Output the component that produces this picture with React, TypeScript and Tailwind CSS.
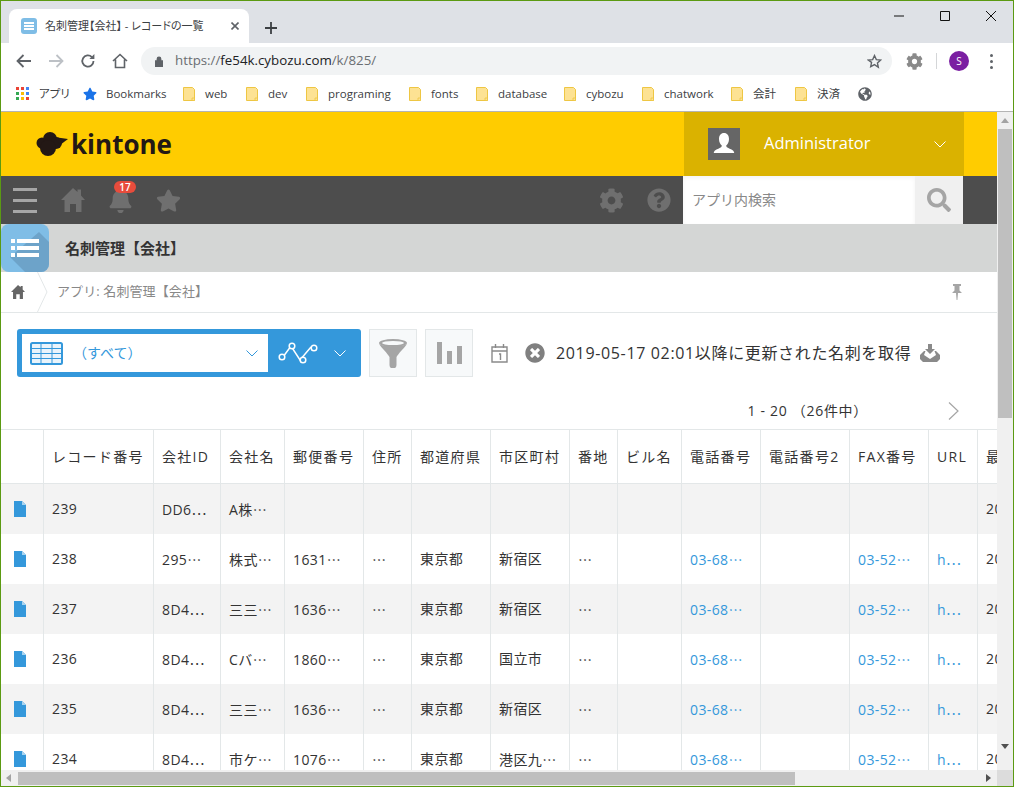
import { FaBell, FaCog, FaQuestionCircle, FaSearch, FaStar, FaTimesCircle, FaGlobeAmericas } from "react-icons/fa";

const bookmarks = [
  { label: "web", cls: "w-[63px]" },
  { label: "dev", cls: "w-[60px]" },
  { label: "programing", cls: "w-[103px]" },
  { label: "fonts", cls: "w-[67px]" },
  { label: "database", cls: "w-[88px]" },
  { label: "cybozu", cls: "w-[78px]" },
  { label: "chatwork", cls: "w-[89px]" },
  { label: "会計", cls: "w-[64px]" },
  { label: "決済", cls: "w-[63px]" },
];

const columns = [
  { label: "", cls: "w-[43px]" },
  { label: "レコード番号", cls: "w-[110px]" },
  { label: "会社ID", cls: "w-[67px]" },
  { label: "会社名", cls: "w-[64px]" },
  { label: "郵便番号", cls: "w-[79px]" },
  { label: "住所", cls: "w-[48px]" },
  { label: "都道府県", cls: "w-[79px]" },
  { label: "市区町村", cls: "w-[79px]" },
  { label: "番地", cls: "w-[48px]" },
  { label: "ビル名", cls: "w-[64px]" },
  { label: "電話番号", cls: "w-[79px]" },
  { label: "電話番号2", cls: "w-[89px]" },
  { label: "FAX番号", cls: "w-[79px]" },
  { label: "URL", cls: "w-[49px]" },
  { label: "最終更新日時", cls: "w-[160px]" },
];

const rows = [
  ["239", "DD6…", "A株…", "", "", "", "", "", "", "", "", "", "", "2019-05-17"],
  ["238", "295…", "株式…", "1631…", "…", "東京都", "新宿区", "…", "", "03-68…", "", "03-52…", "h…", "2019-05-17"],
  ["237", "8D4…", "三三…", "1636…", "…", "東京都", "新宿区", "…", "", "03-68…", "", "03-52…", "h…", "2019-05-17"],
  ["236", "8D4…", "Cバ…", "1860…", "…", "東京都", "国立市", "…", "", "03-68…", "", "03-52…", "h…", "2019-05-17"],
  ["235", "8D4…", "三三…", "1636…", "…", "東京都", "新宿区", "…", "", "03-68…", "", "03-52…", "h…", "2019-05-17"],
  ["234", "8D4…", "市ケ…", "1076…", "…", "東京都", "港区九…", "…", "", "03-68…", "", "03-52…", "h…", "2019-05-17"],
];

const linkCols = [9, 11, 12];

function Chevron({ className }: { className: string }) {
  return (
    <svg className={className} width="12" height="7" viewBox="0 0 12 7" fill="none" stroke="currentColor">
      <path d="M0.5 0.5 6 6 11.5 0.5" />
    </svg>
  );
}

function Folder() {
  return (
    <svg width="12" height="14" viewBox="0 0 12 14" className="shrink-0">
      <path d="M.5.5h9l2 2v11H.5z" fill="#fde293" stroke="#eec643" />
      <path d="M9 11h2.5v2.500H9z" fill="#fde293" stroke="#eec643" strokeWidth=".8" />
    </svg>
  );
}

function HomeIcon({ size, className }: { size: number; className: string }) {
  return (
    <svg className={className} width={size} height={size} viewBox="0 0 24 24" fill="currentColor">
      <path d="M12 0l4.500 4V1.500h3.500v6L24 12h-3.500v12H15v-8H9v8H3.500V12H0z" />
    </svg>
  );
}

function Ellipsis({ text }: { text: string }) {
  // the cut mark sits mid-height, as the Japanese fonts draw it
  if (!text.endsWith("…")) return <>{text}</>;
  return (
    <>
      {text.slice(0, -1)}
      <span className="font-['Noto_Sans_CJK_JP',sans-serif] tracking-[-1px]">…</span>
    </>
  );
}

function BrowserChrome() {
  return (
    <div className="shrink-0 font-['Open_Sans','Noto_Sans_CJK_JP',sans-serif]">
      <div className="flex h-[42px] bg-[#dee1e6] pl-2">
        <div className="mt-2 flex h-[34px] w-[240px] items-center rounded-t-lg bg-white pl-3 pr-[10px]">
          <div className="flex h-4 w-4 shrink-0 flex-col justify-center gap-[1px] rounded-[3px] bg-[#7fbde6] px-[3px]">
            <div className="h-[2px] bg-white" />
            <div className="h-[2px] bg-white" />
            <div className="h-[2px] bg-white" />
          </div>
          <span className="ml-2 whitespace-nowrap text-[11px] text-[#3c4043] [font-feature-settings:'palt']">名刺管理【会社】 - レコードの一覧</span>
          <svg className="ml-auto" width="8" height="8" viewBox="0 0 8 8" stroke="#5f6368" strokeWidth="1.6">
            <path d="M.5.5l7 7M7.5.5l-7 7" />
          </svg>
        </div>
        <svg className="ml-4 mt-[21px]" width="12" height="12" viewBox="0 0 12 12" stroke="#3c4043" strokeWidth="1.8">
          <path d="M6 0v12M0 6h12" />
        </svg>
        <div className="ml-auto mr-[17px] mt-[10px] flex h-[10px] items-center gap-[36px]">
          <svg width="10" height="10" viewBox="0 0 10 10" stroke="#111"><path d="M0 5h10" /></svg>
          <svg width="10" height="10" viewBox="0 0 10 10" stroke="#111" fill="none"><path d="M.5.5h9v9h-9z" /></svg>
          <svg width="10" height="10" viewBox="0 0 10 10" stroke="#111"><path d="M0 0l10 10M10 0L0 10" /></svg>
        </div>
      </div>
      <div className="flex h-[34px] items-start bg-white pl-[15px] pr-[18px] pt-1">
        <div className="flex h-7 items-center gap-[16px]">
          <svg width="16" height="14" viewBox="0 0 16 14" fill="none" stroke="#5f6368" strokeWidth="1.8">
            <path d="M15 7H2M7.500 1 1.500 7l6 6" />
          </svg>
          <svg width="16" height="14" viewBox="0 0 16 14" fill="none" stroke="#bdc1c6" strokeWidth="1.8">
            <path d="M1 7h13M8.500 1l6 6-6 6" />
          </svg>
          <svg width="16" height="16" viewBox="0 0 16 16" fill="none" stroke="#5f6368" strokeWidth="1.8">
            <path d="M13.500 8a5.600 5.600 0 1 1-1.600-3.900" />
            <path d="M14.400 1v5h-5z" fill="#5f6368" stroke="none" />
          </svg>
          <svg width="16" height="16" viewBox="0 0 16 16" fill="none" stroke="#5f6368" strokeWidth="1.6">
            <path d="M1 8 8 1.500 15 8M3.500 6.500v8h9v-8" />
          </svg>
        </div>
        <div className="ml-[13px] flex h-7 w-[751px] items-center rounded-full bg-[#f1f3f4] pl-[14px] pr-[10px]">
          <svg width="8" height="11" viewBox="0 0 8 11">
            <path d="M1.600 4.200V3a2.400 2.400 0 0 1 4.800 0v1.200H8V11H0V4.200z" fill="#5f6368" />
          </svg>
          <span className="ml-[12px] text-[13.3px]">
            <span className="text-[#6a6e72]">https://</span>
            <span className="text-[#202124]">fe54k.cybozu.com</span>
            <span className="text-[#6a6e72]">/k/825/</span>
          </span>
          <svg className="ml-auto" width="15" height="15" viewBox="0 0 24 24" fill="none" stroke="#5f6368" strokeWidth="2.2">
            <path d="M12 2.500l2.900 6.400 7 .8-5.200 4.700 1.400 6.900L12 17l-6.100 3.300 1.400-6.900L2.100 9.700l7-.8z" />
          </svg>
        </div>
        <div className="ml-[14px] flex h-7 items-center">
          <FaCog className="text-[#8a8a8a]" size={17} />
          <div className="ml-[13px] h-4 w-px bg-[#d4d6d8]" />
          <div className="ml-[12px] flex h-5 w-5 items-center justify-center rounded-full bg-[#7b1fa2] text-[10px] text-white">S</div>
          <div className="ml-[21px] flex flex-col gap-[3px]">
            <div className="h-[3px] w-[3px] rounded-full bg-[#5f6368]" />
            <div className="h-[3px] w-[3px] rounded-full bg-[#5f6368]" />
            <div className="h-[3px] w-[3px] rounded-full bg-[#5f6368]" />
          </div>
        </div>
      </div>
      <div className="flex h-[35px] items-center border-b border-[#b4b4b4] bg-white pb-[1px] pl-[15px] text-[11.5px] text-[#3c4043]">
        <div className="flex w-[67px] items-center">
          <div className="grid w-[13px] grid-cols-3 gap-[2px]">
            <div className="h-[3px] bg-[#ea4335]" />
            <div className="h-[3px] bg-[#ea4335]" />
            <div className="h-[3px] bg-[#4285f4]" />
            <div className="h-[3px] bg-[#34a853]" />
            <div className="h-[3px] bg-[#fbbc05]" />
            <div className="h-[3px] bg-[#4285f4]" />
            <div className="h-[3px] bg-[#34a853]" />
            <div className="h-[3px] bg-[#fbbc05]" />
            <div className="h-[3px] bg-[#ea4335]" />
          </div>
          <span className="ml-[10px] [font-feature-settings:'palt']">アプリ</span>
        </div>
        <div className="flex w-[100px] items-center">
          <FaStar className="text-[#1a73e8]" size={14} />
          <span className="ml-[9px]">Bookmarks</span>
        </div>
        {bookmarks.map((b) => (
          <div key={b.label} className={"flex items-center gap-[10px] " + b.cls}>
            <Folder />
            <span>{b.label}</span>
          </div>
        ))}
        <FaGlobeAmericas className="text-[#5f6368]" size={14} />
      </div>
    </div>
  );
}

function AppHeader() {
  return (
    <>
      <div className="flex h-16 shrink-0 items-center bg-[#ffcc00] pl-[35px]">
        <svg width="32" height="24" viewBox="0 0 32 24" fill="#231815" className="mt-[-1px]">
          <circle cx="6" cy="11" r="5.500" />
          <circle cx="14" cy="7" r="7" />
          <circle cx="20" cy="11" r="6" />
          <circle cx="12" cy="16" r="8" />
          <path d="M18 5l14 2-8 6z" />
        </svg>
        <span className="ml-[3px] font-['Open_Sans',sans-serif] text-[26px] font-bold leading-none text-[#231815]">kintone</span>
        <div className="ml-auto mr-[33px] flex h-16 w-[280px] items-center bg-[#dab200] pl-6 pr-[18px] text-white">
          <div className="relative flex h-8 w-8 items-center justify-center overflow-hidden bg-[#666]">
            <svg width="24" height="24" viewBox="0 0 24 24" fill="#fff">
              <path d="M12 1c3.200 0 5 2.400 5 6 0 3-1.400 5.500-2.800 6.500 0 1.500 1 2 3 3 2.500 1 5 2 5 4.500H1.800c0-2.500 2.500-3.500 5-4.500 2-1 3-1.500 3-3C8.400 12.500 7 10 7 7c0-3.600 1.800-6 5-6z" />
            </svg>
          </div>
          <span className="ml-6 mt-[-2px] font-['Open_Sans',sans-serif] text-[16.5px]">Administrator</span>
          <Chevron className="ml-auto" />
        </div>
      </div>
      <div className="flex h-12 shrink-0 items-center bg-[#4d4d4d] pl-3 text-[#6f6f6f]">
        <div className="flex w-6 flex-col gap-2">
          <div className="h-[3px] bg-[#a6a6a6]" />
          <div className="h-[3px] bg-[#a6a6a6]" />
          <div className="h-[3px] bg-[#a6a6a6]" />
        </div>
        <HomeIcon className="ml-6" size={24} />
        <div className="relative ml-[23px] flex">
          <FaBell size={25} />
          <div className="absolute left-[6px] top-[-7px] flex h-3 w-[22px] items-center justify-center rounded-full bg-[#e74c3c] font-['Open_Sans',sans-serif] text-[10px] font-semibold leading-none text-white">
            17
          </div>
        </div>
        <FaStar className="ml-[23px]" size={25} />
        <FaCog className="ml-[418px]" size={25} />
        <FaQuestionCircle className="ml-[23px]" size={24} />
        <div className="ml-3 flex h-12 w-[232px] items-center bg-white pl-[9px] text-sm text-[#888] shadow-inner">アプリ内検索</div>
        <div className="flex h-12 w-12 items-center justify-center bg-[#f0f0f0] text-[#a5a5a5]">
          <FaSearch size={24} />
        </div>
      </div>
      <div className="flex h-12 shrink-0 items-center bg-[#d4d6d5]">
        <div className="relative flex h-12 w-12 flex-col justify-center gap-[3px] overflow-hidden rounded-lg bg-[#7fbde6] px-[10px]">
          <svg className="absolute inset-0" width="48" height="48" viewBox="0 0 48 48">
            <path d="M38 8l10 10v30H24L9 33z" fill="#6da3c9" />
          </svg>
          <div className="relative flex gap-[2px]"><div className="h-1 w-[4px] bg-white" /><div className="h-1 flex-1 bg-white" /></div>
          <div className="relative flex gap-[2px]"><div className="h-1 w-[4px] bg-white" /><div className="h-1 flex-1 bg-white" /></div>
          <div className="relative flex gap-[2px]"><div className="h-1 w-[4px] bg-white" /><div className="h-1 flex-1 bg-white" /></div>
        </div>
        <span className="ml-4 text-[15px] font-bold text-[#333]">名刺管理【会社】</span>
      </div>
      <div className="flex h-[41px] shrink-0 items-center border-b border-[#e3e7e8] bg-white pl-[10px] pr-[35px]">
        <HomeIcon className="text-[#666]" size={14} />
        <svg className="ml-[12px]" width="11" height="40" viewBox="0 0 11 40" fill="none" stroke="#e3e7e8">
          <path d="M.5 0 10 20 .5 40" />
        </svg>
        <span className="ml-[9px] text-[13px] tracking-[0.1px] text-[#888]">アプリ: 名刺管理【会社】</span>
        <svg className="ml-auto" width="10" height="16" viewBox="0 0 10 16" fill="#a5a5a5">
          <path d="M1 0h8v2H7.500v4.500L10 9H6l-.6 7h-.8L4 9H0l2.500-2.500V2H1z" />
        </svg>
      </div>
    </>
  );
}

function RecordsToolbar() {
  return (
    <>
      <div className="mt-4 flex items-center pl-4">
        <div className="flex h-12 w-[344px] items-center rounded-[3px] bg-[#3498db] p-[5px]">
          <div className="flex h-[38px] w-[246px] items-center bg-white pl-2 pr-[10px] text-[#3498db]">
            <svg width="33" height="23" viewBox="0 0 33 23" fill="none" stroke="#3498db">
              <rect x="1" y="1" width="31" height="21" rx="1.500" strokeWidth="2" fill="#eaf4fb" />
              <path d="M1 6.500h31M1 11.500h31M1 16.500h31M11 2v20M22 2v20" strokeWidth="1" />
            </svg>
            <span className="ml-[10px] text-sm">（すべて）</span>
            <Chevron className="ml-auto" />
          </div>
          <svg className="ml-[10px]" width="40" height="22" viewBox="0 0 40 22" fill="none" stroke="#fff" strokeWidth="1.500">
            <path d="M5 15 13 4l9 14 11-13" />
            <circle cx="4" cy="15" r="2.800" fill="#3498db" />
            <circle cx="14" cy="4" r="2.800" fill="#3498db" />
            <circle cx="25" cy="18" r="2.800" fill="#3498db" />
            <circle cx="36" cy="6" r="2.800" fill="#3498db" />
          </svg>
          <Chevron className="ml-4 text-white" />
        </div>
        <div className="ml-2 flex h-12 w-12 items-center justify-center border border-[#e3e7e8] bg-[#f7f9fa]">
          <svg width="30" height="30" viewBox="0 0 30 30">
            <ellipse cx="15" cy="5" rx="14" ry="4" fill="#a5a5a5" />
            <ellipse cx="15" cy="5" rx="11" ry="2" fill="#f7f9fa" />
            <path d="M1 6c2 3 9 10 10.500 13v8a3 3 0 0 0 7 0v-8C20 16 27 9 29 6c-4 3-24 3-28 0z" fill="#a5a5a5" />
          </svg>
        </div>
        <div className="ml-2 flex h-12 w-12 items-end justify-center gap-[5px] border border-[#e3e7e8] bg-[#f7f9fa] pb-[12px]">
          <div className="h-[22px] w-[5px] bg-[#a5a5a5]" />
          <div className="h-[13px] w-[5px] bg-[#a5a5a5]" />
          <div className="h-[18px] w-[5px] bg-[#a5a5a5]" />
        </div>
        <svg className="ml-[18px]" width="17" height="19" viewBox="0 0 17 19" fill="none" stroke="#8a8a8a" strokeWidth="1.400">
          <path d="M1 3h15v15H1zM1 7h15M4.500 0v4M12.500 0v4M8 10h1.500v6" />
        </svg>
        <FaTimesCircle className="ml-[17px] text-[#808080]" size={20} />
        <span className="ml-[11px] whitespace-nowrap text-base tracking-[0.65px] text-[#333]">2019-05-17 02:01以降に更新された名刺を取得</span>
        <svg className="ml-[9px]" width="20" height="18" viewBox="0 0 20 18" fill="#8a8a8a">
          <path d="M8 0h4v5h3l-5 5-5-5h3z" />
          <path d="M4 7l-4 4v4l3 3h14l3-3v-4l-4-4h-1.500L16 11l-6 4-6-4 1.500-4z" />
        </svg>
      </div>
      <div className="flex h-[52px] shrink-0 items-start pr-[38px] pt-[16px] text-sm text-[#333]">
        <span className="ml-auto whitespace-nowrap leading-[36px] tracking-[0.7px]">1 - 20 （26件中）</span>
        <svg className="ml-[80px] mt-[9px]" width="11" height="18" viewBox="0 0 11 18" fill="none" stroke="#a5a5a5" strokeWidth="1.200">
          <path d="M1 .5 10 9l-9 8.500" />
        </svg>
      </div>
    </>
  );
}

function RecordTable() {
  return (
    <table className="w-[1071px] table-fixed border-separate border-spacing-0 text-sm text-[#333]">
      <colgroup>
        {columns.map((c) => (
          <col key={c.label} className={c.cls} />
        ))}
      </colgroup>
      <thead>
        <tr className="h-[55px] bg-white">
          {columns.map((c) => (
            <th key={c.label} className="overflow-hidden whitespace-nowrap border-y border-r border-[#e3e7e8] pl-2 text-left font-normal tracking-[1.3px]">
              {c.label}
            </th>
          ))}
        </tr>
      </thead>
      <tbody>
        {rows.map((row, r) => (
          <tr key={row[0]} className={r % 2 === 0 ? "h-[50px] bg-[#f3f3f3]" : "h-[50px] bg-white"}>
            <td className="border-r border-[#e3e7e8] pl-[13px]">
              <svg width="12" height="16" viewBox="0 0 12 16">
                <path d="M0 0h8l4 4v12H0z" fill="#3498db" />
                <path d="M8 0l4 4H8z" fill="#a9d4f0" />
              </svg>
            </td>
            {row.map((cell, c) => (
              <td
                key={c}
                className={
                  linkCols.includes(c)
                    ? "overflow-hidden whitespace-nowrap border-r border-[#e3e7e8] pl-2 tracking-[0.4px] text-[#3498db]"
                    : "overflow-hidden whitespace-nowrap border-r border-[#e3e7e8] pl-2 tracking-[0.4px]"
                }
              >
                <Ellipsis text={cell} />
              </td>
            ))}
          </tr>
        ))}
      </tbody>
    </table>
  );
}

export default function App() {
  return (
    <div className="flex h-[787px] w-[1014px] flex-col overflow-hidden border border-[#5b9a12] bg-white font-['Open_Sans','Noto_Sans_CJK_JP',sans-serif]">
      <BrowserChrome />
      <div className="flex min-h-0 flex-1">
        <div className="flex min-w-0 flex-1 flex-col">
          <div className="flex min-h-0 flex-1 flex-col overflow-hidden">
            <AppHeader />
            <RecordsToolbar />
            <RecordTable />
          </div>
          <div className="flex h-4 shrink-0 items-center bg-[#f0f0f0]">
            <svg className="ml-[5px]" width="5" height="8" viewBox="0 0 5 8" fill="#a3a3a3"><path d="M5 0v8L0 4z" /></svg>
            <div className="ml-[7px] h-[13px] w-[777px] bg-[#bfbfbf]" />
            <svg className="ml-auto mr-[6px]" width="5" height="8" viewBox="0 0 5 8" fill="#505050"><path d="M0 0v8l5-4z" /></svg>
          </div>
        </div>
        <div className="flex w-4 shrink-0 flex-col items-center bg-[#f0f0f0]">
          <svg className="mt-[6px]" width="8" height="5" viewBox="0 0 8 5" fill="#a3a3a3"><path d="M0 5h8L4 0z" /></svg>
          <div className="mt-[6px] h-[289px] w-[14px] bg-[#bfbfbf]" />
          <svg className="mb-[21px] mt-auto" width="8" height="5" viewBox="0 0 8 5" fill="#505050"><path d="M0 0h8L4 5z" /></svg>
          <div className="h-4 w-4 bg-[#dcdcdc]" />
        </div>
      </div>
    </div>
  );
}
